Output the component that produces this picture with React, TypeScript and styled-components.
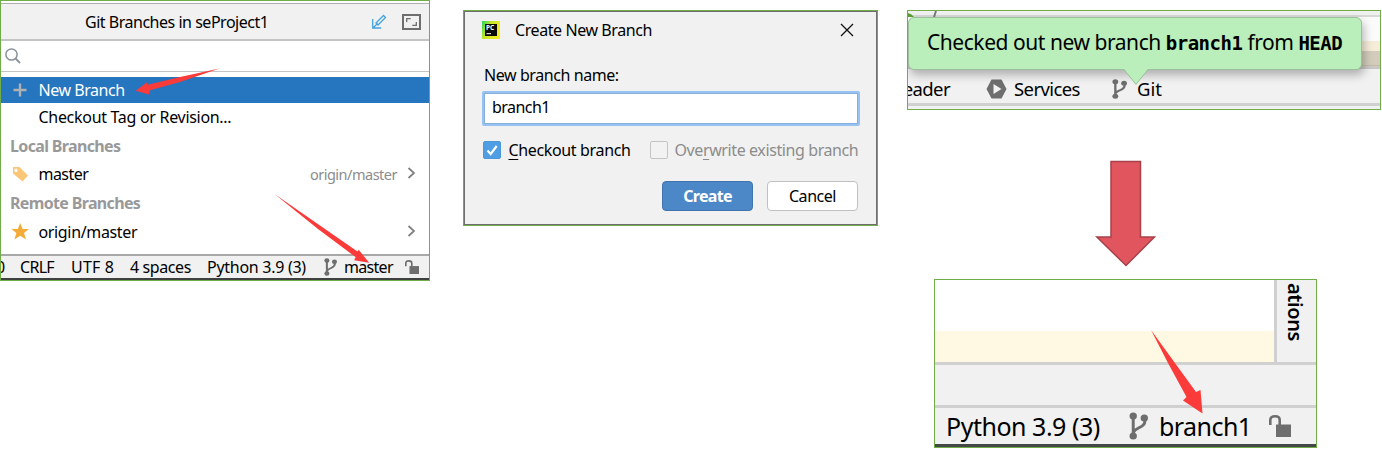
import styled, { createGlobalStyle, css } from "styled-components";

const GlobalStyle = createGlobalStyle`
  * {
    box-sizing: border-box;
  }

  body {
    margin: 0;
    background: #fff;
    color: #000;
    font-family: "Noto Sans", "Open Sans", sans-serif;
  }

  svg {
    display: block;
  }
`;

interface TextProps {
  $size?: number;
  $spacing?: number;
  $color?: string;
  $bold?: boolean;
}

const Text = styled.span<TextProps>`
  display: block;
  white-space: nowrap;
  ${(props) => css`
    font-size: ${props.$size || 16}px;
    line-height: ${(props.$size || 16) + 6}px;
    letter-spacing: ${props.$spacing || 0}px;
    color: ${props.$color || "inherit"};
    font-weight: ${props.$bold ? 700 : 400};
  `}
`;

const Page = styled.main`
  display: flex;
  align-items: flex-start;
  width: 1382px;
  height: 449px;
  overflow: hidden;
`;

const Frame = styled.section<{ $width: number; $height: number }>`
  position: relative;
  display: flex;
  flex-direction: column;
  flex-shrink: 0;
  overflow: hidden;
  border: 1px solid #70ad47;
  ${(props) => css`
    width: ${props.$width}px;
    height: ${props.$height}px;
  `}
`;

const Overlay = styled.svg`
  position: absolute;
  top: -1px;
  left: -1px;
  pointer-events: none;
`;

/* branches popup */

const PopupHeader = styled.header`
  display: grid;
  grid-template-columns: 84px 1fr 31px 20px 7px;
  align-items: center;
  height: 38px;
  margin-top: 2px;
  border-top: 1px solid #b0b0b0;
  border-bottom: 2px solid #c4c4c4;
  background: #f1f1f1;
`;

const SearchField = styled.div`
  display: flex;
  align-items: center;
  height: 31px;
  padding-left: 4px;
  margin-bottom: 5px;
  border-bottom: 1px solid #c4c4c4;
`;

const BranchRow = styled.div<{ $height: number; $selected?: boolean }>`
  display: grid;
  grid-template-columns: 27.5px 1fr auto 19px;
  align-items: center;
  padding: 0 13px 0 10px;
  height: ${(props) => props.$height}px;
  background: ${(props) => (props.$selected ? "#2675bf" : "#fff")};
  color: ${(props) => (props.$selected ? "#fff" : "#000")};
`;

const GroupTitle = styled.div`
  display: flex;
  align-items: center;
  height: 29px;
  padding-left: 9px;
`;

const ChevronIcon = styled.svg`
  justify-self: end;
`;

const StatusBar = styled.footer`
  display: grid;
  grid-template-columns: 19px 51px 59px 77px 117px 20px 61px 25px;
  align-items: center;
  height: 26px;
  margin-top: auto;
  border-top: 2px solid #a8a8a8;
  border-bottom: 2px solid #3f4141;
  background: #f1f1f1;
`;

const CutText = styled(Text)`
  margin-left: -5px;
`;

/* create branch dialog */

const DialogSlot = styled.div`
  margin: 10px 0 0 33px;
`;

const DialogBody = styled.div`
  flex: 1;
  padding: 0 18px 0 18px;
  border: 1px solid #6f6f6f;
  background: #f1f1f1;
`;

const TitleBar = styled.div`
  display: grid;
  grid-template-columns: 33px 1fr 18px;
  align-items: center;
  height: 36px;
  margin-left: -1px;
`;

const FieldLabel = styled.label`
  display: block;
  height: 43px;
  padding: 16px 0 0 1px;
`;

const BranchInput = styled.div`
  display: flex;
  align-items: center;
  height: 35px;
  width: 378px;
  margin-left: -1px;
  padding: 0 0 4px 8px;
  border: 2px solid #97c3f3;
  border-radius: 2px;
  background: #fff;
  box-shadow: inset 0 0 0 1px #87afda;
`;

const Options = styled.div`
  display: grid;
  grid-template-columns: 25.5px 141px 25px 1fr;
  align-items: center;
  height: 18px;
  margin-top: 13px;
`;

const CheckBox = styled.span<{ $checked?: boolean }>`
  display: flex;
  align-items: center;
  justify-content: center;
  width: 18px;
  height: 18px;
  border: 1px solid ${(props) => (props.$checked ? "#4b97d9" : "#c4c4c4")};
  border-radius: 2px;
  background: ${(props) => (props.$checked ? "#4f9ee3" : "#f2f2f2")};
`;

const Mnemonic = styled.u`
  text-underline-offset: 3px;
  text-decoration-thickness: 1px;
`;

const Actions = styled.div`
  display: flex;
  justify-content: flex-end;
  gap: 14px;
  margin-top: 24px;
`;

const Button = styled.button<{ $primary?: boolean }>`
  display: flex;
  align-items: center;
  justify-content: center;
  width: 91px;
  height: 30px;
  padding: 0;
  border-radius: 4px;
  font-family: inherit;
  ${(props) =>
    props.$primary
      ? css`
          border: 1px solid #3f74ae;
          background: #4c87c8;
          color: #fff;
        `
      : css`
          border: 1px solid #c0c0c0;
          background: #fff;
          color: #000;
        `}
`;

/* notification and result */

const ResultColumn = styled.div`
  display: flex;
  flex-direction: column;
  margin: 10px 0 0 29px;
`;

const EditorStrip = styled.div`
  height: 58px;
  border-bottom: 2px solid #c6c6c8;
  background: linear-gradient(
    #f0f0f0 0 4px,
    #d6d9d6 4px 6px,
    #fbfbfb 6px 30px,
    #f5edd8 30px 40px,
    #d3ccbc 40px 54px,
    #c1bbae 54px 55px,
    #d3ccbc 55px
  );
`;

const ToolBar = styled.div`
  display: grid;
  grid-template-columns: 78px 28px 98px 25px 1fr;
  align-items: center;
  height: 34px;
  padding-top: 6px;
  background: #f1f1f1;
`;

const ToolBarEdge = styled.div`
  flex: 1;
  border-top: 3px solid #d0d0d0;
  background: #f1f1f1;
`;

const Clipped = styled.div`
  display: flex;
  justify-content: flex-end;
  width: 42px;
`;

const Balloon = styled.div`
  position: absolute;
  top: 6px;
  left: 0;
  display: flex;
  align-items: center;
  width: 454px;
  height: 53px;
  padding: 0 0 1px 18px;
  border: 1px solid #9bc09b;
  border-radius: 6px;
  background: #baeeba;
  box-shadow: 2px 5px 10px rgba(0, 0, 0, 0.28);
`;

const BalloonTail = styled.svg`
  position: absolute;
  top: 51px;
  left: 215px;
`;

const Code = styled.strong`
  font-family: "DejaVu Sans Mono", monospace;
  font-size: 19px;
  letter-spacing: -0.5px;
`;

const DownArrow = styled.svg`
  margin: 50px 0 0 188px;
`;

const ResultSlot = styled.div`
  margin: 12px 0 0 27px;
`;

const EditorArea = styled.div`
  display: grid;
  grid-template-columns: 1fr 42px;
  height: 85px;
  border-bottom: 3px solid #d0d0d0;
`;

const CurrentLine = styled.div`
  margin-top: 51px;
  background: #fff9e3;
`;

const SideStripe = styled.div`
  display: flex;
  justify-content: center;
  border-left: 3px solid #d0d0d0;
  background: #f1f1f1;
  writing-mode: vertical-rl;
  align-items: flex-end;
  overflow: hidden;
`;

const SideLabel = styled(Text)`
  margin: 0 0 17px 6px;
  line-height: 24px;
  font-weight: 600;
`;

const EmptyBar = styled.div`
  height: 40px;
  background: #f1f1f1;
`;

const LargeStatusBar = styled.footer`
  display: grid;
  grid-template-columns: 183px 30px 110px 1fr;
  align-items: center;
  flex: 1;
  padding-left: 11px;
  border-top: 3px solid #d0d0d0;
  border-bottom: 3px solid #434745;
  background: #f1f1f1;
`;

const BranchIcon = ({ width, height }: { width: number; height: number }) => (
  <svg width={width} height={height} viewBox="0 0 18 28" preserveAspectRatio="none">
    <path
      d="M4 4v20M15 6v3.5c0 4-3 5-6 6.5-2.5 1.2-4 2.5-5 4.5"
      fill="none"
      stroke="#6e6e6e"
      strokeWidth="2.8"
    />
    <circle cx="4" cy="4" r="3.5" fill="#6e6e6e" />
    <circle cx="4" cy="24" r="3.5" fill="#6e6e6e" />
    <circle cx="14.5" cy="6" r="3.5" fill="#6e6e6e" />
  </svg>
);

const LockIcon = ({ width, height }: { width: number; height: number }) => (
  <svg width={width} height={height} viewBox="0 0 22 22" preserveAspectRatio="none">
    <path d="M1.3 10V5q0-3.7 4.7-3.7T10.7 5v6" fill="none" stroke="#6e6e6e" strokeWidth="2.6" />
    <path d="M7 9.5h15V22H7z" fill="#6e6e6e" />
  </svg>
);

const Chevron = () => (
  <ChevronIcon width="9" height="14" viewBox="0 0 9 14">
    <path d="M1.5 1l5.5 5-5.5 5" fill="none" stroke="#7f7f7f" strokeWidth="1.7" />
  </ChevronIcon>
);

const BranchesPopup = () => (
  <Frame $width={430} $height={281}>
    <PopupHeader>
      <span />
      <Text $spacing={-0.48}>Git Branches in seProject1</Text>
      <svg width="16" height="16" viewBox="0 0 16 16">
        <g fill="none" stroke="#45a3dc" strokeWidth="1.3">
          <path d="M1.7 5v9h8.5M2 14l4.5-4.5" />
          <path d="M5 9l7.5-7.5 2 2L7 11z" />
        </g>
      </svg>
      <svg width="19" height="16" viewBox="0 0 19 16">
        <path d="M1 1h17v14H1z" fill="none" stroke="#6e6e6e" strokeWidth="2" />
        <path d="M4.7 8V4.7h4M14.3 8v3.3h-4" fill="none" stroke="#6e6e6e" strokeWidth="1.3" />
      </svg>
    </PopupHeader>
    <SearchField>
      <svg width="16" height="16" viewBox="0 0 16 16">
        <circle cx="6.5" cy="6.5" r="5.6" fill="none" stroke="#87939a" strokeWidth="1.5" />
        <path d="M10.5 10.5L15 15" stroke="#87939a" strokeWidth="1.8" />
      </svg>
    </SearchField>
    <BranchRow $height={26} $selected>
      <svg width="18" height="14" viewBox="0 0 18 14">
        <path d="M9 .5v13M2.5 7h13" stroke="#afb1b3" strokeWidth="2.4" />
      </svg>
      <Text $spacing={-0.45}>New Branch</Text>
    </BranchRow>
    <BranchRow $height={28}>
      <span />
      <Text $spacing={-0.3}>Checkout Tag or Revision...</Text>
    </BranchRow>
    <GroupTitle>
      <Text $bold $spacing={-0.65} $color="#999">
        Local Branches
      </Text>
    </GroupTitle>
    <BranchRow $height={28}>
      <svg width="18" height="16" viewBox="0 0 18 16">
        <path
          d="M2 1h6.5L17 9.5l-5.5 6L2 7.5zM5 2.600a1.700 1.700 0 1 0 .01 0z"
          fill="#f9c777"
          fillRule="evenodd"
        />
      </svg>
      <Text $spacing={-0.55}>master</Text>
      <Text $size={14.5} $spacing={-0.5} $color="#8c8c8c">
        origin/master
      </Text>
      <Chevron />
    </BranchRow>
    <GroupTitle>
      <Text $bold $spacing={-0.65} $color="#999">
        Remote Branches
      </Text>
    </GroupTitle>
    <BranchRow $height={29}>
      <svg width="18" height="17" viewBox="0 0 18 17">
        <path
          d="M9.2 0l2.4 6H18l-5 4 2 6.5-5.8-3.8-5.8 3.8 2-6.5-5-4h6.4z"
          fill="#f5ab38"
        />
      </svg>
      <Text $spacing={-0.35}>origin/master</Text>
      <span />
      <Chevron />
    </BranchRow>
    <StatusBar>
      <CutText>0</CutText>
      <Text $spacing={-0.7}>CRLF</Text>
      <Text $spacing={0.2}>UTF 8</Text>
      <Text $spacing={-0.4}>4 spaces</Text>
      <Text $spacing={-0.28}>Python 3.9 (3)</Text>
      <BranchIcon width={13} height={18} />
      <Text $spacing={-0.7}>master</Text>
      <LockIcon width={14} height={14} />
    </StatusBar>
    <Overlay width="430" height="281" viewBox="0 0 430 281">
      <g fill="#fb3b3a">
        <path d="M135.7 90.7L147 82.3l.6 2.5L180 77l39.5-8.5L180 82l-30 8.2-1 4.3z" />
        <path d="M274.5 194l83 57.5 1.2-1.7 10.5 13-15-2.5 1.4-3.2L318 229z" />
      </g>
    </Overlay>
  </Frame>
);

const CreateBranchDialog = () => (
  <Frame $width={415} $height={216}>
    <DialogBody>
      <TitleBar>
        <svg width="18" height="18" viewBox="0 0 18 18">
          <defs>
            <linearGradient id="logo" x1="0" y1="0" x2="1" y2="0.5">
              <stop offset="0" stopColor="#21d760" />
              <stop offset="0.45" stopColor="#c5e62a" />
              <stop offset="1" stopColor="#f2ec20" />
            </linearGradient>
          </defs>
          <path d="M0 0h18v18H0z" fill="url(#logo)" />
          <path d="M3 3h12v12H3z" fill="#0a0a0a" />
          <text x="4" y="9" fontSize="6.5" fontWeight="700" fill="#fff">
            PC
          </text>
          <path d="M4.5 12.7H9" stroke="#fff" />
        </svg>
        <Text $spacing={-0.42}>Create New Branch</Text>
        <svg width="14" height="14" viewBox="0 0 14 14">
          <path d="M1 1l12 12M13 1L1 13" stroke="#111" strokeWidth="1.3" />
        </svg>
      </TitleBar>
      <FieldLabel>
        <Text $spacing={-0.42}>New branch name:</Text>
      </FieldLabel>
      <BranchInput>
        <Text $spacing={-0.55}>branch1</Text>
      </BranchInput>
      <Options>
        <CheckBox $checked>
          <svg width="12" height="12" viewBox="0 0 12 12">
            <path d="M1.5 6.5l3.2 3.5 6-8" fill="none" stroke="#fff" strokeWidth="2.2" />
          </svg>
        </CheckBox>
        <Text $spacing={-0.35}>
          <Mnemonic>C</Mnemonic>heckout branch
        </Text>
        <CheckBox />
        <Text $spacing={-0.4} $color="#8c8c8c">
          Ove<Mnemonic>r</Mnemonic>write existing branch
        </Text>
      </Options>
      <Actions>
        <Button $primary>
          <Text $bold $spacing={-0.7}>
            Create
          </Text>
        </Button>
        <Button>
          <Text $spacing={-0.45}>Cancel</Text>
        </Button>
      </Actions>
    </DialogBody>
  </Frame>
);

const Notification = () => (
  <Frame $width={474} $height={100}>
    <EditorStrip />
    <ToolBar>
      <Clipped>
        <Text $size={18.5} $spacing={-0.6}>
          eader
        </Text>
      </Clipped>
      <svg width="21" height="20" viewBox="0 0 21 20">
        <path d="M5.5.5h10l5 9.5-5 9.5h-10L.5 10z" fill="#6e6e6e" />
        <path d="M7.5 5l8 5-8 5z" fill="#f1f1f1" />
      </svg>
      <Text $size={18.5} $spacing={-0.6}>
        Services
      </Text>
      <BranchIcon width={15} height={20} />
      <Text $size={18.5}>Git</Text>
    </ToolBar>
    <ToolBarEdge />
    <Overlay width="30" height="8" viewBox="0 0 30 8">
      <path d="M1 3q4 1 6 4H1z" fill="#54a02f" />
      <path d="M29 1l-2 6" stroke="#777" strokeWidth="2" />
    </Overlay>
    <Balloon>
      <Text $size={21} $spacing={-0.45}>
        Checked out new branch <Code>branch1</Code> from <Code>HEAD</Code>
      </Text>
      <BalloonTail width="25" height="17" viewBox="0 0 25 17">
        <path d="M0 0h24L12 15.5z" fill="#baeeba" />
        <path d="M0 .5l12 15L24 .5" fill="none" stroke="#9bc09b" />
      </BalloonTail>
    </Balloon>
  </Frame>
);

const ResultEditor = () => (
  <Frame $width={383} $height={169}>
    <EditorArea>
      <CurrentLine />
      <SideStripe>
        <SideLabel $size={20} $spacing={-0.4}>
          ations
        </SideLabel>
      </SideStripe>
    </EditorArea>
    <EmptyBar />
    <LargeStatusBar>
      <Text $size={25} $spacing={-0.48}>
        Python 3.9 (3)
      </Text>
      <BranchIcon width={19} height={28} />
      <Text $size={25} $spacing={-0.55}>
        branch1
      </Text>
      <LockIcon width={22} height={22} />
    </LargeStatusBar>
    <Overlay width="383" height="169" viewBox="0 0 383 169">
      <path d="M217 51l45 62 4.5-2 2 23.5-19.500-13 3.500-3.500L234 84z" fill="#fb3b3a" />
    </Overlay>
  </Frame>
);

const App = () => (
  <>
    <GlobalStyle />
    <Page>
      <BranchesPopup />
      <DialogSlot>
        <CreateBranchDialog />
      </DialogSlot>
      <ResultColumn>
        <Notification />
        <DownArrow width="61" height="107" viewBox="0 0 61 107">
          <path
            d="M16 1.5h29.5V77h14L31 105.500 1.800 77H16z"
            fill="#e1565e"
            stroke="#a8404a"
            strokeWidth="1.5"
          />
        </DownArrow>
        <ResultSlot>
          <ResultEditor />
        </ResultSlot>
      </ResultColumn>
    </Page>
  </>
);

export default App;
